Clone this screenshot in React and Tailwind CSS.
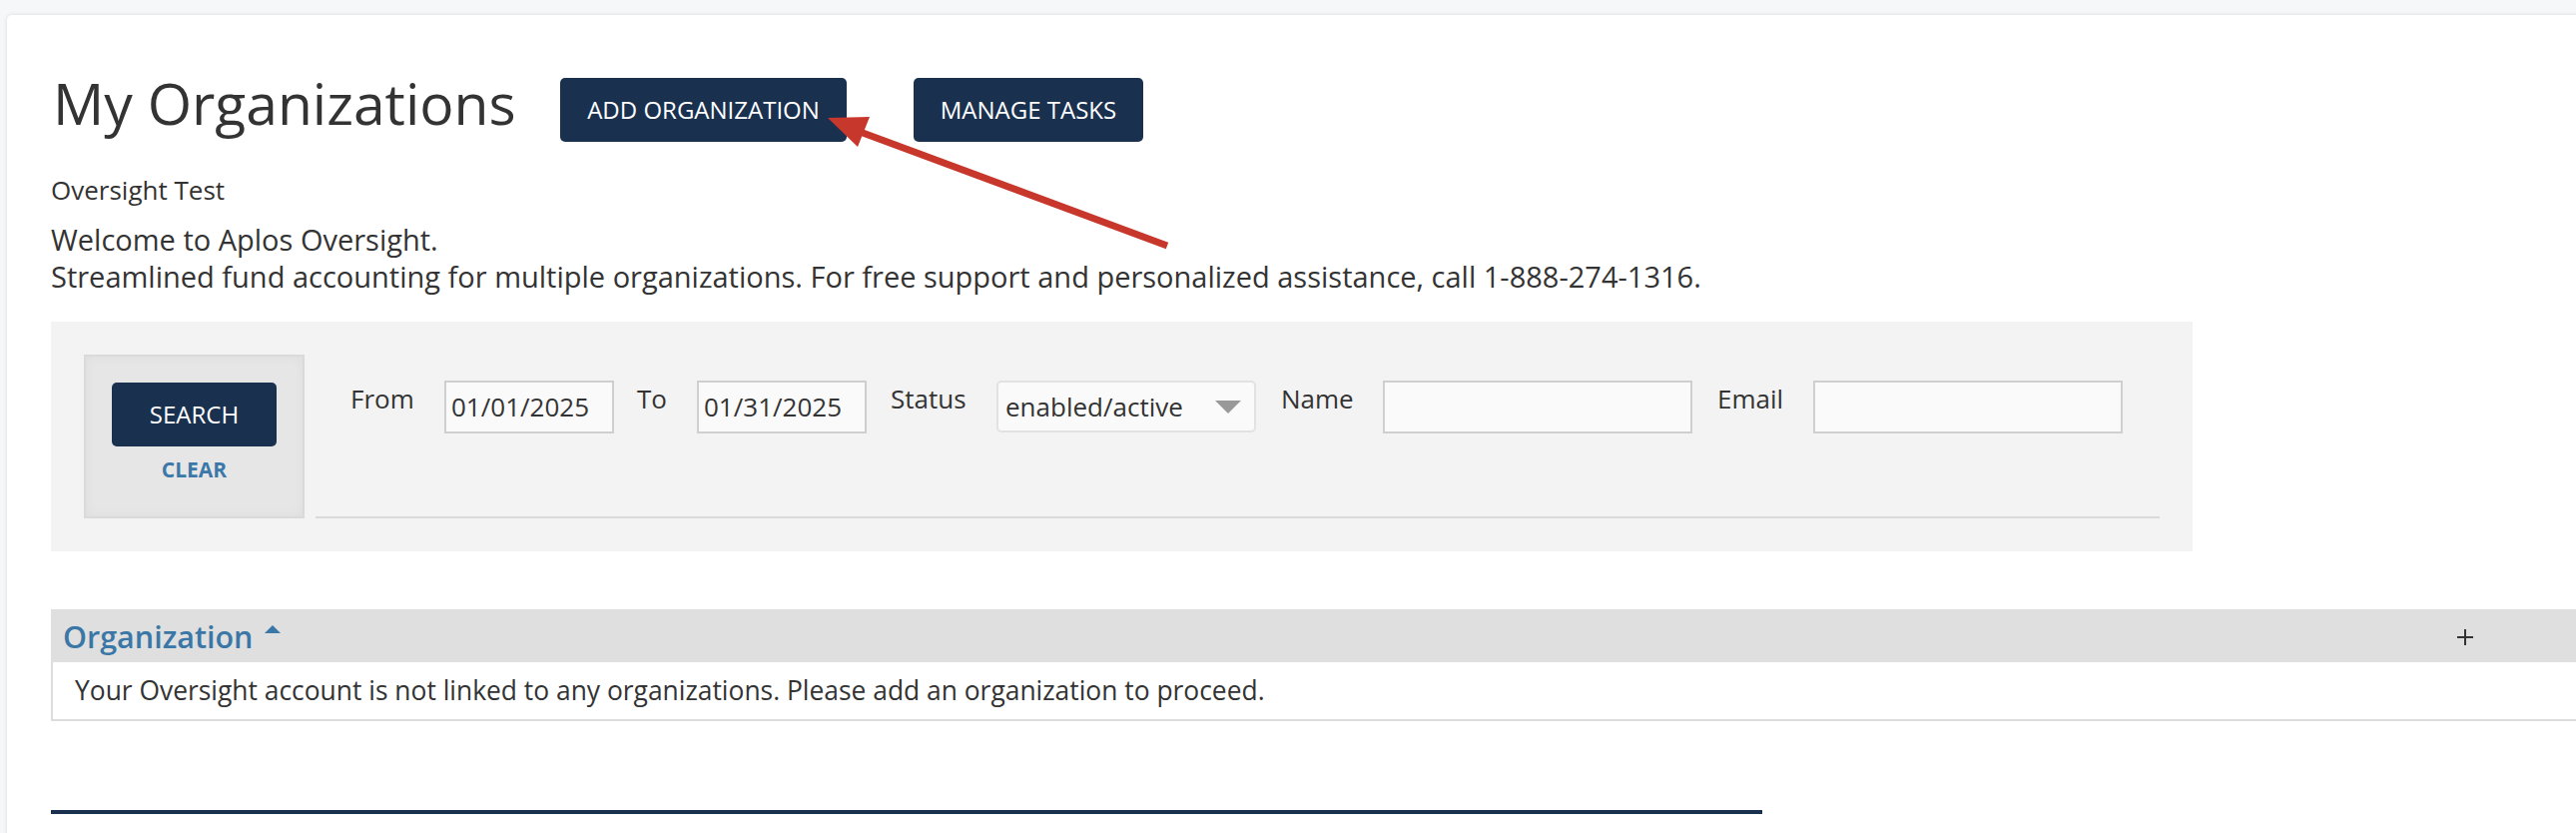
export default function App() {
  return (
    <div className="relative min-h-screen w-full overflow-hidden bg-[#f6f7f9] pl-[7px] pt-[15px] font-['Open_Sans',sans-serif] text-[#333]">
      <div className="min-h-[830px] w-[2600px] rounded-tl-[5px] bg-white pl-[44px] pt-[56px] shadow-[0_0_4px_rgba(0,0,0,0.12)]">
        {/* page header */}
        <div className="flex items-start">
          <h1 className="ml-[2px] mt-[4px] w-[508px] text-[57px] font-normal leading-none">My Organizations</h1>
          <button className="mt-[7px] h-[64px] w-[287px] rounded-[5px] bg-[#19304f] text-[24px] text-white">
            ADD ORGANIZATION
          </button>
          <button className="ml-[67px] mt-[7px] h-[64px] w-[230px] rounded-[5px] bg-[#19304f] text-[24px] text-white">
            MANAGE TASKS
          </button>
        </div>

        <p className="mt-[32px] text-[26px] leading-[32px]">Oversight Test</p>
        <div className="mt-[15px] text-[29px] leading-[37px]">
          <div>Welcome to Aplos Oversight.</div>
          <div>
            Streamlined fund accounting for multiple organizations. For free support and personalized assistance, call
            1-888-274-1316.
          </div>
        </div>

        {/* search panel */}
        <div className="mt-[27px] flex w-[2145px] bg-[#f3f3f3] p-[33px]">
          <div className="flex h-[164px] w-[221px] flex-col items-center border-2 border-[#dadada] bg-[#e6e6e6] pt-[26px] shadow-[inset_0_0_12px_rgba(0,0,0,0.04)]">
            <button className="h-[64px] w-[165px] rounded-[5px] bg-[#19304f] text-[24px] text-white">SEARCH</button>
            <span className="mt-[11px] text-[21px] font-bold leading-[24px] text-[#3b78a9]">CLEAR</span>
          </div>
          <div className="ml-[11px] flex h-[164px] flex-1 items-start border-b-2 border-[#d9d9d9] pl-[35px] pt-[26px] text-[26px]">
            <span className="mt-[2px] w-[94px] leading-[32px]">From</span>
            <div className="flex h-[53px] w-[170px] items-center border-2 border-[#cfcfcf] bg-[#fafafa] pl-[5px]">
              01/01/2025
            </div>
            <span className="ml-[23px] mt-[2px] w-[60px] leading-[32px]">To</span>
            <div className="flex h-[53px] w-[170px] items-center border-2 border-[#cfcfcf] bg-[#fafafa] pl-[5px]">
              01/31/2025
            </div>
            <span className="ml-[24px] mt-[2px] w-[106px] leading-[32px]">Status</span>
            <div className="flex h-[52px] w-[260px] items-center justify-between rounded-[5px] border-2 border-[#e2e2e2] bg-[#fafafa] pl-[7px] pr-[13px]">
              <span>enabled/active</span>
              <svg width="26" height="13" viewBox="0 0 26 13">
                <polygon points="0,0 26,0 13,13" fill="#999" />
              </svg>
            </div>
            <span className="ml-[25px] mt-[2px] w-[102px] leading-[32px]">Name</span>
            <div className="h-[53px] w-[310px] border-2 border-[#cfcfcf] bg-[#fafafa]" />
            <span className="ml-[25px] mt-[2px] w-[96px] leading-[32px]">Email</span>
            <div className="h-[53px] w-[310px] border-2 border-[#cfcfcf] bg-[#fafafa]" />
          </div>
        </div>

        {/* organizations table */}
        <div className="mt-[58px] w-[2529px]">
          <div className="flex h-[53px] items-center bg-[#dfdfdf] pl-[12px] pt-[2px]">
            <span className="text-[30.5px] font-semibold text-[#3a77a7]">Organization</span>
            <svg className="mb-[16px] ml-[11px]" width="16" height="8" viewBox="0 0 16 8">
              <polygon points="0,8 16,8 8,0" fill="#3a77a7" />
            </svg>
            <svg className="ml-auto mr-[103px]" width="16" height="16" viewBox="0 0 16 16">
              <path d="M8 0v16M0 8h16" stroke="#333" strokeWidth="2" />
            </svg>
          </div>
          <div className="flex h-[59px] items-center border-b-2 border-l-2 border-[#dddddd] pl-[22px] text-[26.4px]">
            Your Oversight account is not linked to any organizations. Please add an organization to proceed.
          </div>
        </div>

        <div className="mt-[89px] h-[4px] w-[1714px] bg-[#19304f]" />
      </div>

      {/* red annotation arrow */}
      <svg className="pointer-events-none absolute left-0 top-0" width="2580" height="834" viewBox="0 0 2580 834">
        <line x1="1169" y1="246" x2="856" y2="130" stroke="#c8372b" strokeWidth="7" />
        <polygon points="829,118 871,117 859,147" fill="#c8372b" />
      </svg>
    </div>
  );
}
